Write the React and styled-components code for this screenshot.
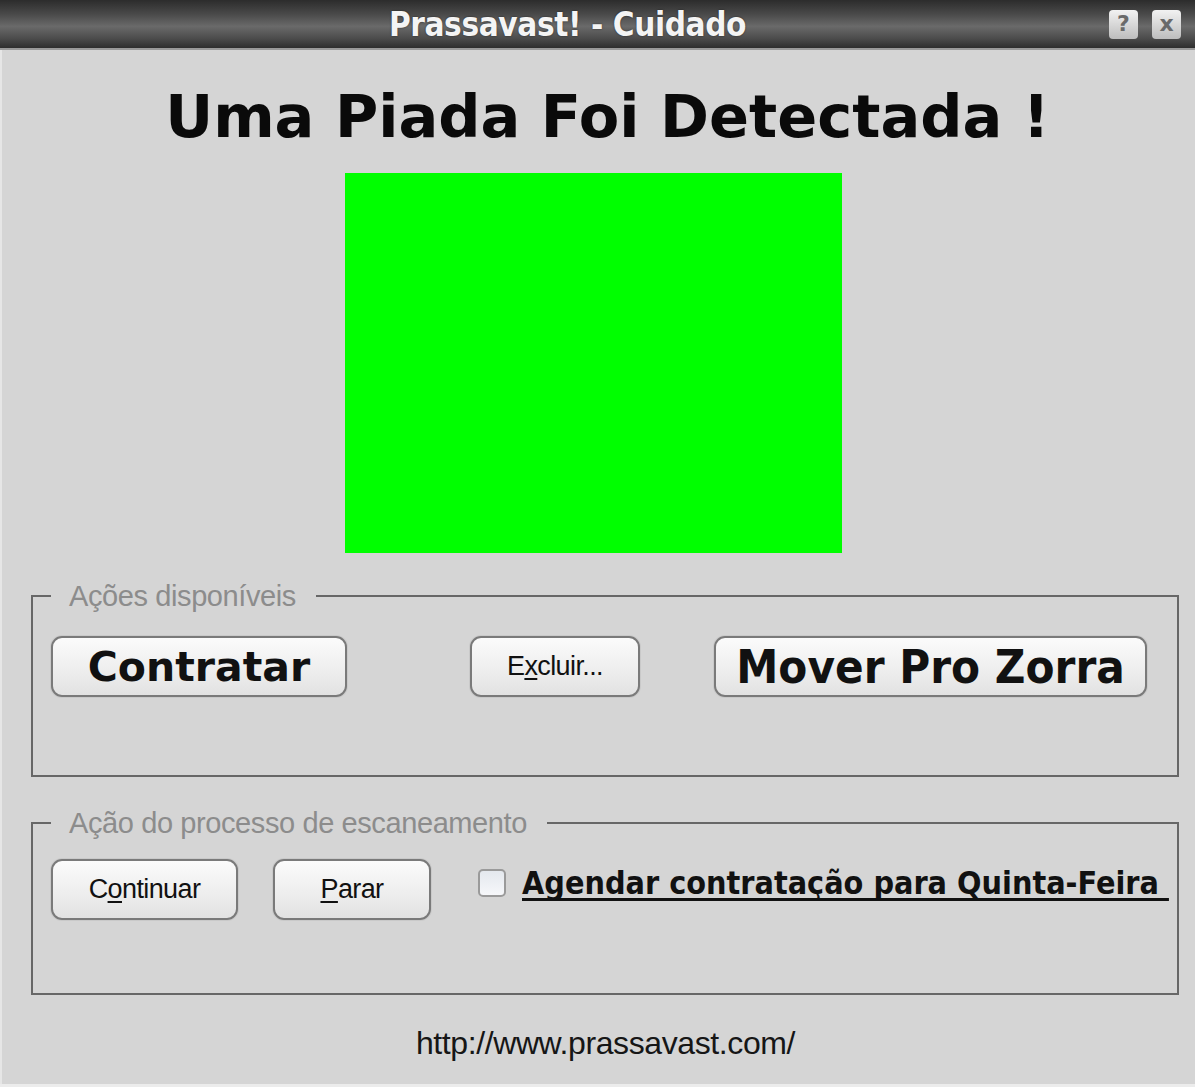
import React from 'react';
import styled, { createGlobalStyle } from 'styled-components';

/* ───────── global ───────── */

const GlobalStyle = createGlobalStyle`
  html, body {
    margin: 0;
    padding: 0;
    background: #d5d5d5;
  }
  body {
    font-family: "Liberation Sans", Arial, sans-serif;
  }
`;

/* ───────── window chrome ───────── */

const Window = styled.div`
  width: 1195px;
  height: 1087px;
  display: flex;
  flex-direction: column;
  background: #d5d5d5;
  box-sizing: border-box;
  border-bottom: 3px solid #ececec;
  overflow: hidden;
`;

const TitleBar = styled.div`
  height: 48px;
  flex: none;
  display: grid;
  grid-template-columns: 1fr auto 1fr;
  align-items: center;
  background: linear-gradient(#2c2c2c 0%, #4a4a4a 30%, #6a6a6a 55%, #4c4c4c 80%, #2e2e2e 100%);
  border-bottom: 2px solid #9a9a9a;
`;

const TitleText = styled.div`
  grid-column: 2;
  font-family: "DejaVu Sans Condensed", "DejaVu Sans", sans-serif;
  font-weight: 700;
  font-size: 33px;
  color: #f4f4f4;
  letter-spacing: -0.4px;
  padding-right: 60px;
  text-shadow: 0 0 2px rgba(0, 0, 0, 0.6);
`;

const TitleControls = styled.div`
  grid-column: 3;
  justify-self: end;
  display: flex;
  gap: 14px;
  padding-right: 14px;
`;

const ControlButton = styled.div`
  width: 29px;
  height: 29px;
  display: flex;
  align-items: center;
  justify-content: center;
  border-radius: 4px;
  background: linear-gradient(#f2f2f2, #bdbdbd);
  color: #6a6a6a;
  font-family: "DejaVu Sans", sans-serif;
  font-weight: 700;
  font-size: 22px;
  line-height: 1;
`;

/* ───────── body ───────── */

const Body = styled.div`
  flex: 1;
  display: flex;
  flex-direction: column;
  border-left: 2px solid #e6e6e6;
`;

const Heading = styled.h1`
  margin: 31px 0 0 0;
  padding-left: 18px;
  text-align: center;
  font-family: "DejaVu Sans", Verdana, sans-serif;
  font-weight: 700;
  font-size: 59px;
  line-height: 72px;
  color: #0a0a0a;
`;

const Preview = styled.div`
  align-self: flex-start;
  margin: 20px 0 0 343px;
  width: 497px;
  height: 380px;
  background: #00ff00;
`;

const Group = styled.fieldset`
  margin: ${p => p.$top}px 16px 0 29px;
  padding: ${p => p.$padTop}px 30px ${p => p.$padBottom}px 18px;
  border: 2px solid #676767;
  min-width: 0;
`;

const Legend = styled.legend`
  padding: 0 20px 0 18px;
  font-family: "Liberation Sans", Arial, sans-serif;
  font-size: 29px;
  line-height: 32px;
  color: #8c8c8c;
  letter-spacing: -0.4px;
`;

const Row = styled.div`
  display: flex;
  align-items: ${p => p.$align || 'center'};
  gap: ${p => p.$gap || 0}px;
`;

const Button = styled.button`
  flex: none;
  width: ${p => p.$w}px;
  height: 61px;
  margin-left: ${p => p.$offset || 0}px;
  box-sizing: border-box;
  padding: 0;
  border: 2px solid #7a7a7a;
  border-radius: 11px;
  background: linear-gradient(#fbfbfb, #ededed 60%, #e2e2e2);
  box-shadow: 0 0 0 1px #c9c9c9;
  color: #111;
  cursor: pointer;
  font-family: ${p => (p.$big ? '"DejaVu Sans", Verdana, sans-serif' : '"Liberation Sans", Arial, sans-serif')};
  font-weight: ${p => (p.$big ? 700 : 400)};
  font-size: ${p => p.$size || 27}px;
  letter-spacing: ${p => (p.$big ? 0 : -0.6)}px;
`;

const Condensed = styled.span`
  font-family: "DejaVu Sans Condensed", "DejaVu Sans", sans-serif;
`;

const Mnemonic = styled.span`
  text-decoration: underline;
  text-underline-offset: 3px;
`;

const CheckLabel = styled.label`
  display: flex;
  align-items: flex-start;
  gap: 16px;
  margin-left: 12px;
  cursor: pointer;
`;

const CheckBox = styled.span`
  width: 28px;
  height: 28px;
  margin-top: 10px;
  box-sizing: border-box;
  border: 2px solid #9a9a9a;
  border-radius: 5px;
  background: linear-gradient(#e4e8ee, #f6f7fa);
  flex: none;
`;

const CheckText = styled.span`
  font-family: "DejaVu Sans Condensed", "DejaVu Sans", sans-serif;
  font-weight: 700;
  font-size: 32px;
  line-height: 48px;
  color: #111;
  text-decoration: underline;
  text-decoration-thickness: 3px;
  text-decoration-skip-ink: none;
  text-underline-offset: 4px;
  white-space: pre;
`;

const Footer = styled.div`
  flex: 1;
  display: flex;
  align-items: center;
  justify-content: center;
  padding: 8px 0 0 14px;
  font-family: "Liberation Sans", Arial, sans-serif;
  font-size: 32px;
  letter-spacing: -0.4px;
  color: #161616;
`;

/* ───────── component ───────── */

const App = () => {
  return (
    <>
      <GlobalStyle />
      <Window>
        <TitleBar>
          <TitleText>Prassavast! - Cuidado</TitleText>
          <TitleControls>
            <ControlButton>?</ControlButton>
            <ControlButton>x</ControlButton>
          </TitleControls>
        </TitleBar>

        <Body>
          <Heading>Uma Piada Foi Detectada !</Heading>
          <Preview />

          <Group $top={27} $padTop={24} $padBottom={78}>
            <Legend>Ações disponíveis</Legend>
            <Row>
              <Button $w={296} $big $size={41}>Contratar</Button>
              <Button $w={170} $offset={123}>
                E<Mnemonic>x</Mnemonic>cluir...
              </Button>
              <Button $w={433} $offset={74} $big $size={47}>
                <Condensed>Mover Pro Zorra</Condensed>
              </Button>
            </Row>
          </Group>

          <Group $top={30} $padTop={20} $padBottom={73}>
            <Legend>Ação do processo de escaneamento</Legend>
            <Row $align="flex-start" $gap={35}>
              <Button $w={187}>
                C<Mnemonic>o</Mnemonic>ntinuar
              </Button>
              <Button $w={158}>
                <Mnemonic>P</Mnemonic>arar
              </Button>
              <CheckLabel>
                <CheckBox />
                <CheckText>Agendar contratação para Quinta-Feira </CheckText>
              </CheckLabel>
            </Row>
          </Group>

          <Footer>http://www.prassavast.com/</Footer>
        </Body>
      </Window>
    </>
  );
};

export default App;
